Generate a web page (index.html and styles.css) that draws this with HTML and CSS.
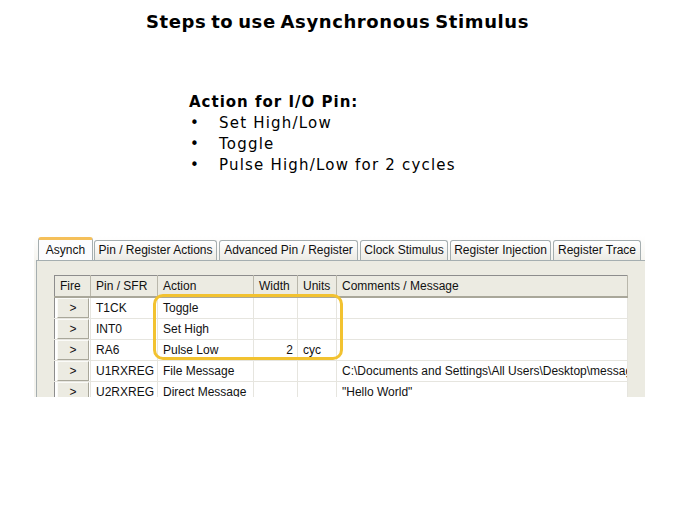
FILE: index.html
```html
<!DOCTYPE html>
<html>
<head>
<meta charset="utf-8">
<link rel="stylesheet" href="styles.css">
</head>
<body>
<h1 class="title">Steps to use Asynchronous Stimulus</h1>
<section class="notes">
  <h2 class="notes-head">Action for I/O Pin:</h2>
  <ul class="bullets">
    <li><span class="dot">•</span>Set High/Low</li>
    <li><span class="dot">•</span>Toggle</li>
    <li><span class="dot">•</span>Pulse High/Low for 2 cycles</li>
  </ul>
</section>
<div class="shot">
  <div class="tabs">
    <div class="tab active w1">Asynch</div>
    <div class="tab w2">Pin / Register Actions</div>
    <div class="tab w3">Advanced Pin / Register</div>
    <div class="tab w4">Clock Stimulus</div>
    <div class="tab w5">Register Injection</div>
    <div class="tab w6">Register Trace</div>
  </div>
  <div class="panel">
    <table class="grid">
      <colgroup>
        <col class="c1"><col class="c2"><col class="c3"><col class="c4"><col class="c5"><col class="c6">
      </colgroup>
      <thead>
        <tr><th>Fire</th><th>Pin / SFR</th><th>Action</th><th>Width</th><th>Units</th><th>Comments / Message</th></tr>
      </thead>
      <tbody>
        <tr><td class="fire"><span class="btn">&gt;</span></td><td>T1CK</td><td>Toggle</td><td></td><td></td><td></td></tr>
        <tr><td class="fire"><span class="btn">&gt;</span></td><td>INT0</td><td>Set High</td><td></td><td></td><td></td></tr>
        <tr><td class="fire"><span class="btn">&gt;</span></td><td>RA6</td><td>Pulse Low</td><td class="num">2</td><td>cyc</td><td></td></tr>
        <tr><td class="fire"><span class="btn">&gt;</span></td><td>U1RXREG</td><td>File Message</td><td></td><td></td><td>C:\Documents and Settings\All Users\Desktop\message.txt</td></tr>
        <tr><td class="fire"><span class="btn">&gt;</span></td><td>U2RXREG</td><td>Direct Message</td><td></td><td></td><td>"Hello World"</td></tr>
      </tbody>
    </table>
  </div>
  <div class="highlight"></div>
</div>
</body>
</html>
```
FILE: styles.css
```css
html, body {
  margin: 0;
  padding: 0;
  background: #ffffff;
  color: #000000;
}
body {
  width: 675px;
  height: 506px;
  overflow: hidden;
  font-family: "DejaVu Sans", Verdana, sans-serif;
}
.title {
  margin: 12px 0 0 0;
  font-size: 18px;
  line-height: 20px;
  font-weight: bold;
  text-align: center;
  letter-spacing: 0.6px;
  word-spacing: -2px;
}
.notes {
  margin: 60px 0 0 189px;
}
.notes-head {
  margin: 0;
  font-size: 15px;
  line-height: 21px;
  font-weight: bold;
  letter-spacing: 1px;
}
.bullets {
  list-style: none;
  margin: 0;
  padding: 0;
  font-size: 15px;
  line-height: 21px;
  letter-spacing: 1.2px;
}
.bullets li {
  display: flex;
}
.dot {
  display: inline-block;
  width: 30px;
  padding-left: 1px;
  box-sizing: border-box;
}
.shot {
  position: relative;
  margin: 60px 0 0 34px;
  width: 611px;
  height: 161px;
  overflow: hidden;
  background: #f4f3ee;
  font-family: "Liberation Sans", Tahoma, sans-serif;
  font-size: 12px;
  color: #111;
}
.tabs {
  display: flex;
  align-items: flex-end;
  gap: 2px;
  height: 24px;
  padding-left: 4px;
  background: linear-gradient(#ffffff, #f6f5f0);
}
.tab {
  box-sizing: border-box;
  height: 20px;
  line-height: 18px;
  text-align: center;
  white-space: nowrap;
  border: 1px solid #a5aeb0;
  border-bottom: none;
  border-radius: 3px 3px 0 0;
  background: linear-gradient(#ffffff, #ecebe5);
}
.tab.active {
  height: 23px;
  line-height: 20px;
  background: #fcfcfe;
  border-top: 3px solid #f5c05a;
  border-color: #f5c05a #a5aeb0 #a5aeb0 #a5aeb0;
  margin-right: -1px;
}
.w1 { width: 55px; }
.w2 { width: 123px; }
.w3 { width: 139px; }
.w4 { width: 88px; }
.w5 { width: 101px; }
.w6 { width: 88px; }
.panel {
  box-sizing: border-box;
  height: 137px;
  margin-left: 2px;
  border-left: 1px solid #a5aeb0;
  border-top: 1px solid #a5aeb0;
  background: #ecebe2;
  padding: 14px 0 0 17px;
}
.grid {
  border-collapse: collapse;
  table-layout: fixed;
  width: 573px;
  background: #ffffff;
  border-top: 1px solid #8d8d8d;
  border-left: 1px solid #8d8d8d;
}
.c1 { width: 36px; }
.c2 { width: 67px; }
.c3 { width: 96px; }
.c4 { width: 44px; }
.c5 { width: 39px; }
.c6 { width: 291px; }
.grid th {
  height: 20px;
  padding: 0 0 0 5px;
  text-align: left;
  font-weight: normal;
  background: #ecebe2;
  border-right: 1px solid #b9b7ab;
  border-bottom: 2px solid #a9a79a;
  white-space: nowrap;
  overflow: hidden;
}
.grid td {
  height: 20px;
  padding: 0 0 0 5px;
  border-right: 1px solid #e6e5df;
  border-bottom: 1px solid #e6e5df;
  white-space: nowrap;
  overflow: hidden;
}
.grid td.num {
  text-align: right;
  padding: 0 4px 0 0;
}
.grid td.fire {
  padding: 0;
  text-align: center;
}
.btn {
  display: block;
  box-sizing: border-box;
  height: 20px;
  line-height: 18px;
  margin: 0 1px 0 2px;
  background: #ecebe2;
  border-top: 1px solid #fbfbf8;
  border-left: 1px solid #fbfbf8;
  border-right: 1px solid #a9a79a;
  border-bottom: 1px solid #a9a79a;
}
.highlight {
  position: absolute;
  left: 119px;
  top: 58px;
  width: 190px;
  height: 66px;
  box-sizing: border-box;
  border: 3px solid #f2c230;
  border-radius: 10px;
}
```
